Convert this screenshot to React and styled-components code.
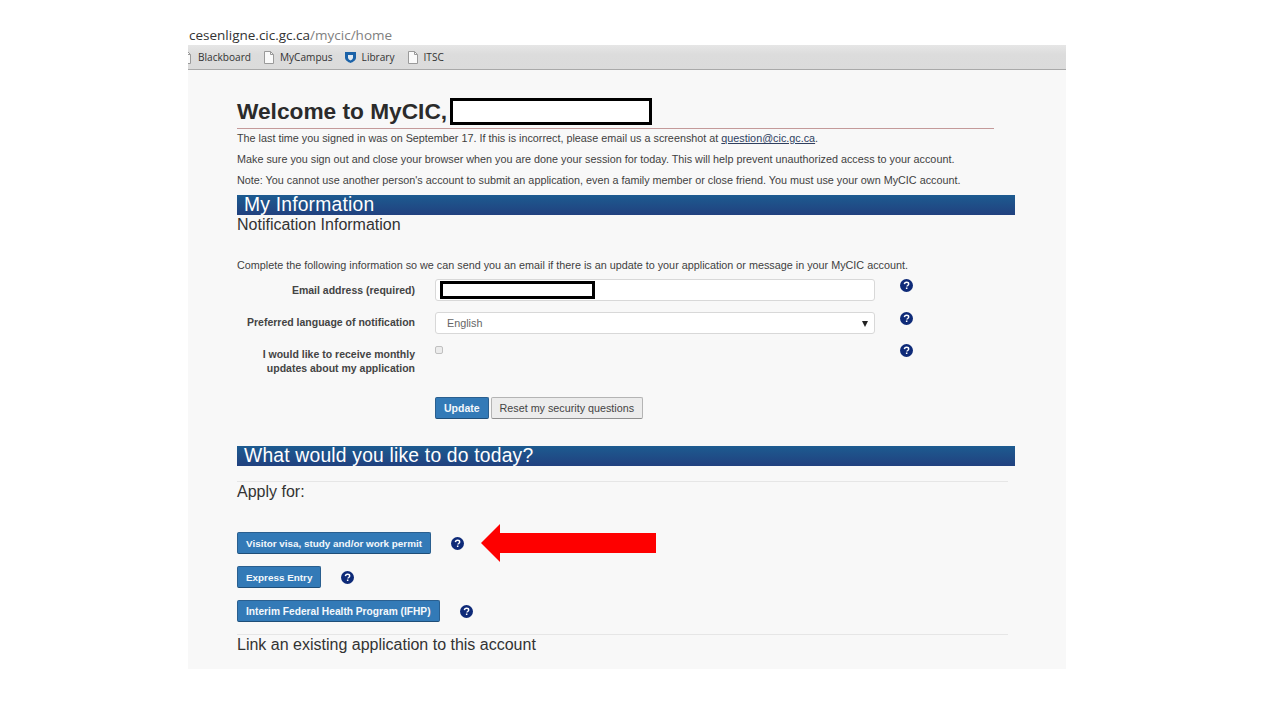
import React from "react";
import styled, { createGlobalStyle } from "styled-components";

const Global = createGlobalStyle`
  html, body { margin: 0; padding: 0; background: #fff; }
  body { font-family: "Liberation Sans", Arial, sans-serif; color: #333; }
  #root { width: 1280px; height: 720px; overflow: hidden; }
`;

const Page = styled.div`
  width: 878px;
  margin-left: 188px;
  padding-top: 27px;
`;
const Url = styled.div`
  height: 18px;
  line-height: 16px;
  padding-left: 1px;
  font-family: "Open Sans", sans-serif;
  font-size: 13.5px;
  color: #333;
  span { color: #808080; }
`;
const Bookmarks = styled.div`
  height: 25px;
  box-sizing: border-box;
  display: flex;
  align-items: center;
  background: linear-gradient(#e6e6e6, #dcdcdc 40%, #dbdbdb);
  border-bottom: 1px solid #a9a9a9;
  font-family: "Open Sans", sans-serif;
  font-size: 10.1px;
  color: #333;
  overflow: hidden;
`;
const Bookmark = styled.div`
  display: flex;
  align-items: center;
  gap: 6px;
  margin-left: ${(p) => p.$gap}px;
  white-space: nowrap;
`;
const Content = styled.div`
  height: 599px;
  box-sizing: border-box;
  background: #f8f8f8;
  padding: 28px 51px 0 49px;
  overflow: hidden;
`;
const Title = styled.h1`
  margin: 0;
  width: 757px;
  height: 30px;
  box-sizing: content-box;
  display: flex;
  align-items: flex-start;
  gap: 3px;
  border-bottom: 1px solid #c49a9a;
  font-size: 22.7px;
  font-weight: 700;
  line-height: 26px;
  color: #2b2b2b;
`;
const TitleRedact = styled.span`
  display: block;
  width: 202px;
  height: 27px;
  box-sizing: border-box;
  border: 3px solid #000;
  background: #fff;
`;
const Para = styled.p`
  margin: 0;
  height: 21px;
  line-height: 21px;
  font-size: 10.8px;
  color: #3f3f3f;
  white-space: nowrap;
  a { color: #2f3f5f; text-decoration: underline; }
`;
const Intro = styled.div`
  margin-top: -1px;
`;
const Banner = styled.h2`
  margin: ${(p) => p.$top}px 0 0;
  height: 20px;
  width: 778px;
  padding-left: 7px;
  box-sizing: border-box;
  background: linear-gradient(#1d5b90, #21417f);
  color: #fff;
  font-size: 19.3px;
  font-weight: 400;
  line-height: 19px;
  letter-spacing: 0.2px;
  white-space: nowrap;
`;
const SubHead = styled.div`
  margin-top: ${(p) => p.$top || 0}px;
  height: 20px;
  line-height: 20px;
  font-size: 16px;
  color: #333;
  white-space: nowrap;
`;
const Lead = styled(Para)`
  margin-top: 20px;
  height: 20px;
  line-height: 20px;
`;
const FormRow = styled.div`
  display: grid;
  grid-template-columns: 178px 440px 20px;
  column-gap: 20px;
  margin-top: ${(p) => p.$top}px;
  align-items: start;
`;
const Label = styled.label`
  display: block;
  text-align: right;
  font-size: 10.5px;
  font-weight: 700;
  line-height: 14px;
  color: #444;
  padding-top: ${(p) => p.$pad}px;
  white-space: nowrap;
`;
const Field = styled.div`
  position: relative;
  height: 22px;
  box-sizing: border-box;
  background: #fff;
  border: 1px solid #d8d8d8;
  border-radius: 3px;
  padding-left: 11px;
  font-size: 10.8px;
  line-height: 21px;
  color: #666;
`;
const FieldRedact = styled.span`
  position: absolute;
  left: 4px;
  top: 1px;
  width: 155px;
  height: 18px;
  box-sizing: border-box;
  border: 3px solid #000;
  background: #fff;
`;
const Caret = styled.span`
  position: absolute;
  right: 6px;
  top: 8px;
  width: 0;
  height: 0;
  border-left: 3px solid transparent;
  border-right: 3px solid transparent;
  border-top: 6px solid #222;
`;
const Check = styled.span`
  display: block;
  width: 6px;
  height: 6px;
  margin-top: 2px;
  background: #ececec;
  border: 1px solid #c0c0c0;
  border-radius: 2px;
`;
const HelpCell = styled.div`
  padding-left: 5px;
`;
const Actions = styled.div`
  display: flex;
  gap: 2px;
  margin: 0 0 0 198px;
  padding-top: 22px;
`;
const Btn = styled.div`
  height: 22px;
  box-sizing: border-box;
  padding: 0 8px;
  display: flex;
  align-items: center;
  background: #337ab7;
  border: 1px solid #2a5f8f;
  border-bottom-color: #1f4e78;
  border-radius: 2px;
  color: #f4f8fc;
  font-size: ${(p) => p.$size || 10.5}px;
  font-weight: 700;
  white-space: nowrap;
`;
const GhostBtn = styled.div`
  height: 22px;
  box-sizing: border-box;
  padding: 0 8px;
  display: flex;
  align-items: center;
  background: #ececec;
  border: 1px solid #b4b4b4;
  border-bottom-color: #8f8f8f;
  border-radius: 2px;
  color: #444;
  font-size: 10.75px;
  white-space: nowrap;
`;
const Rule = styled.hr`
  margin: ${(p) => p.$top}px 0 0;
  border: 0;
  border-top: 1px solid #e6e6e6;
  width: 771px;
`;
const ApplyRow = styled.div`
  display: flex;
  align-items: center;
  margin-top: ${(p) => p.$top}px;
  gap: 20px;
`;
const Arrow = styled.svg`
  display: block;
  margin: -8px 0 -8px -3px;
`;

const Help = () => (
  <svg width="13" height="13" viewBox="0 0 13 13" style={{ display: "block" }}>
    <circle cx="6.5" cy="6.5" r="6.5" fill="#0e2a78" />
    <path d="M4.4 5.1C4.5 3.8 5.4 3.2 6.6 3.2c1.2 0 2.1.7 2.1 1.7 0 .8-.5 1.2-1.1 1.6-.5.3-.6.5-.6 1" fill="none" stroke="#fff" strokeWidth="1.4" />
    <rect x="5.9" y="8.5" width="1.5" height="1.5" fill="#fff" />
  </svg>
);

const Doc = () => (
  <svg width="10" height="13" viewBox="0 0 10 13">
    <path d="M.5.5h6l3 3v9H.5z" fill="#fafafa" stroke="#9a9a9a" />
    <path d="M6.5.5v3h3" fill="none" stroke="#9a9a9a" />
  </svg>
);

const Shield = () => (
  <svg width="11" height="12" viewBox="0 0 11 12">
    <path d="M0 1h11v5.5C11 9.5 8 11 5.5 12 3 11 0 9.5 0 6.5z" fill="#1b62a8" />
    <path d="M3 4h5v2.5C8 8 6.5 9 5.5 9.5 4.5 9 3 8 3 6.5z" fill="#dfe9f2" />
  </svg>
);

export default function App() {
  return (
    <>
      <Global />
      <Page>
        <Url>cesenligne.cic.gc.ca<span>/mycic/home</span></Url>
        <Bookmarks>
          <Bookmark $gap={-7}><Doc /></Bookmark>
          <Bookmark $gap={7}>Blackboard</Bookmark>
          <Bookmark $gap={13}><Doc />MyCampus</Bookmark>
          <Bookmark $gap={12}><Shield />Library</Bookmark>
          <Bookmark $gap={13}><Doc />ITSC</Bookmark>
        </Bookmarks>
        <Content>
          <Title>Welcome to MyCIC,<TitleRedact /></Title>
          <Intro>
            <Para>The last time you signed in was on September 17. If this is incorrect, please email us a screenshot at <a>question@cic.gc.ca</a>.</Para>
            <Para>Make sure you sign out and close your browser when you are done your session for today. This will help prevent unauthorized access to your account.</Para>
            <Para>Note: You cannot use another person's account to submit an application, even a family member or close friend. You must use your own MyCIC account.</Para>
          </Intro>
          <Banner $top={4}>My Information</Banner>
          <SubHead>Notification Information</SubHead>
          <Lead>Complete the following information so we can send you an email if there is an update to your application or message in your MyCIC account.</Lead>
          <FormRow $top={4}>
            <Label $pad={4}>Email address (required)</Label>
            <Field><FieldRedact /></Field>
            <HelpCell><Help /></HelpCell>
          </FormRow>
          <FormRow $top={11}>
            <Label $pad={3}>Preferred language of notification</Label>
            <Field>English<Caret /></Field>
            <HelpCell><Help /></HelpCell>
          </FormRow>
          <FormRow $top={10}>
            <Label $pad={3}>I would like to receive monthly<br />updates about my application</Label>
            <Check />
            <HelpCell><Help /></HelpCell>
          </FormRow>
          <Actions>
            <Btn>Update</Btn>
            <GhostBtn>Reset my security questions</GhostBtn>
          </Actions>
          <Banner $top={27}>What would you like to do today?</Banner>
          <Rule $top={15} />
          <SubHead>Apply for:</SubHead>
          <ApplyRow $top={30}>
            <Btn $size={9.9}>Visitor visa, study and/or work permit</Btn>
            <Help />
            <Arrow width="175" height="38" viewBox="0 0 175 38">
              <path d="M0 19 19 0v9h156v20H19v9z" fill="#fe0000" />
            </Arrow>
          </ApplyRow>
          <ApplyRow $top={12}>
            <Btn $size={9.9}>Express Entry</Btn>
            <Help />
          </ApplyRow>
          <ApplyRow $top={12}>
            <Btn $size={10.2}>Interim Federal Health Program (IFHP)</Btn>
            <Help />
          </ApplyRow>
          <Rule $top={12} />
          <SubHead>Link an existing application to this account</SubHead>
        </Content>
      </Page>
    </>
  );
}
